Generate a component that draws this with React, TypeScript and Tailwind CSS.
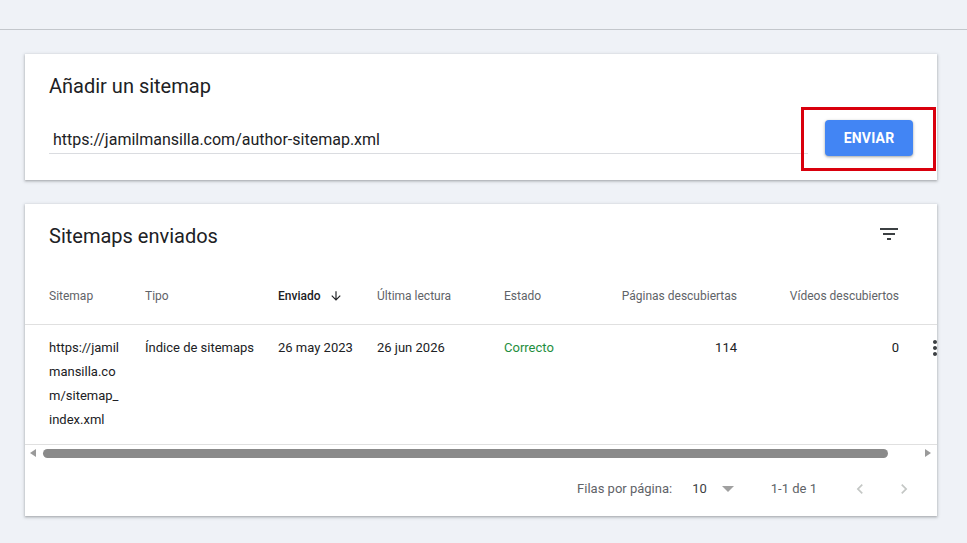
import React from "react";

const cardShadow =
  "bg-white shadow-[0_1px_2px_rgba(60,64,67,0.3),0_1px_3px_1px_rgba(60,64,67,0.15)]";

function FilterIcon() {
  return (
    <svg width="24" height="24" viewBox="0 0 24 24" className="fill-[#3c4043]">
      <path d="M10 18h4v-2h-4v2zM3 6v2h18V6H3zm3 7h12v-2H6v2z" />
    </svg>
  );
}

function ArrowDown() {
  return (
    <svg width="14" height="14" viewBox="0 0 24 24" className="fill-[#202124]">
      <path d="M20 12l-1.41-1.41L13 16.17V4h-2v12.17l-5.58-5.59L4 12l8 8 8-8z" />
    </svg>
  );
}

function MoreVert() {
  return (
    <svg width="24" height="24" viewBox="0 0 24 24" className="fill-[#3c4043]">
      <path d="M12 8c1.1 0 2-.9 2-2s-.9-2-2-2-2 .9-2 2 .9 2 2 2zm0 2c-1.1 0-2 .9-2 2s.9 2 2 2 2-.9 2-2-.9-2-2-2zm0 6c-1.1 0-2 .9-2 2s.9 2 2 2 2-.9 2-2-.9-2-2-2z" />
    </svg>
  );
}

function ChevronLeft() {
  return (
    <svg width="20" height="20" viewBox="0 0 24 24" className="fill-[#c4c7c5]">
      <path d="M15.41 7.41L14 6l-6 6 6 6 1.41-1.41L10.83 12z" />
    </svg>
  );
}

function ChevronRight() {
  return (
    <svg width="20" height="20" viewBox="0 0 24 24" className="fill-[#c4c7c5]">
      <path d="M10 6L8.59 7.41 13.17 12l-4.58 4.59L10 18l6-6z" />
    </svg>
  );
}

export default function App() {
  return (
    <div className="min-h-[543px] w-full bg-[#eff2f7] font-['Roboto','Liberation_Sans',sans-serif]">
      <div className="h-[30px] border-b border-[#c3c7cc]" />
      <div className="pt-[24px] pl-[25px] pr-[30px] flex flex-col gap-[24px]">
        {/* Card 1 */}
        <div className={`${cardShadow} px-[24px] pt-[18px] pb-[24px]`}>
          <div className="text-[20px] leading-[28px] text-[#202124]">Añadir un sitemap</div>
          <div className="mt-[20px] flex items-start gap-[17px]">
            <div className="flex-1 mt-[8px] border-b border-[#dadce0] pb-[1px] pl-[4px] text-[16px] leading-[24px] text-[#202124]">
              https://jamilmansilla.com/author-sitemap.xml
            </div>
            <div className="relative">
              <div className="h-[36px] w-[88px] rounded-[4px] bg-[#4285f4] flex items-center justify-center text-white text-[14px] font-bold tracking-[0.2px] shadow-[0_1px_2px_rgba(60,64,67,0.3),0_1px_3px_1px_rgba(60,64,67,0.15)]">
                ENVIAR
              </div>
              <div className="absolute -left-[24px] -right-[23px] -top-[13px] -bottom-[15px] border-[3px] border-[#d9000d]" />
            </div>
          </div>
        </div>

        {/* Card 2 */}
        <div className={`${cardShadow} pt-[18px]`}>
          <div className="flex items-start justify-between pl-[24px] pr-[36px]">
            <div className="text-[20px] leading-[28px] text-[#202124]">Sitemaps enviados</div>
            <FilterIcon />
          </div>

          <div className="mt-[18px] overflow-hidden">
            {/* Header row */}
            <div className="flex w-max h-[57px] items-center border-b border-[#e0e0e0] text-[12px] leading-[16px] text-[#5f6368]">
              <div className="w-[120px] pl-[24px]">Sitemap</div>
              <div className="w-[133px]">Tipo</div>
              <div className="w-[99px] flex items-center gap-[8px] font-medium text-[#202124]">
                <span>Enviado</span>
                <ArrowDown />
              </div>
              <div className="w-[127px]">Última lectura</div>
              <div className="w-[80px]">Estado</div>
              <div className="w-[153px] text-right">Páginas descubiertas</div>
              <div className="w-[162px] text-right">Vídeos descubiertos</div>
              <div className="w-[60px]" />
            </div>

            {/* Body row */}
            <div className="flex w-max items-start pt-[11px] pb-[12px] border-b border-[#e0e0e0] text-[13px] leading-[24px] text-[#202124]">
              <div className="w-[120px] pl-[24px]">
                <div>https://jamil</div>
                <div>mansilla.co</div>
                <div>m/sitemap_</div>
                <div>index.xml</div>
              </div>
              <div className="w-[133px]">Índice de sitemaps</div>
              <div className="w-[99px]">26 may 2023</div>
              <div className="w-[127px]">26 jun 2026</div>
              <div className="w-[80px] text-[#1e8e3e]">Correcto</div>
              <div className="w-[153px] text-right">114</div>
              <div className="w-[162px] text-right">0</div>
              <div className="w-[60px] pl-[24px]">
                <MoreVert />
              </div>
            </div>

            {/* Scrollbar */}
            <div className="flex h-[16px] items-center pl-[4px]">
              <svg width="8" height="8" viewBox="0 0 8 8" className="fill-[#9a9a9a]">
                <polygon points="7,0 7,8 1,4" />
              </svg>
              <div className="ml-[6px] h-[9px] w-[845px] rounded-full bg-[#8a8a8a]" />
              <div className="flex-1" />
              <svg width="8" height="8" viewBox="0 0 8 8" className="mr-[5px] fill-[#9a9a9a]">
                <polygon points="1,0 1,8 7,4" />
              </svg>
            </div>
          </div>

          {/* Pagination */}
          <div className="flex h-[55px] items-center justify-end pr-[23px] text-[13px] text-[#5f6368]">
            <span>Filas por página:</span>
            <span className="ml-[20px] text-[13px] text-[#3c4043]">10</span>
            <svg width="12" height="6" viewBox="0 0 12 6" className="ml-[15px] fill-[#a0a0a0]">
              <polygon points="0,0 12,0 6,6" />
            </svg>
            <span className="ml-[37px]">1-1 de 1</span>
            <span className="ml-[33px]">
              <ChevronLeft />
            </span>
            <span className="ml-[24px]">
              <ChevronRight />
            </span>
          </div>
        </div>
      </div>
    </div>
  );
}
